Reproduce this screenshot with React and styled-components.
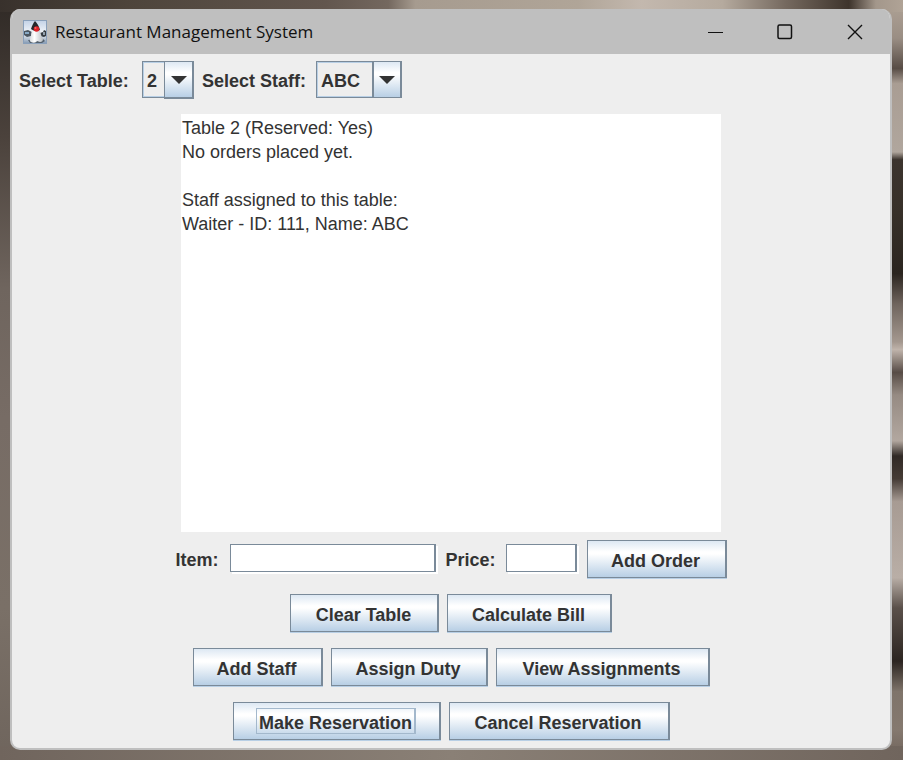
import React, { useState } from "react";
import styled, { createGlobalStyle, css } from "styled-components";

const GlobalStyle = createGlobalStyle`
  * { box-sizing: border-box; }
  html, body { margin: 0; }
  body { font-family: "Liberation Sans", Arial, sans-serif; color: #333; }
`;

const Desktop = styled.div`
  display: flex;
  min-height: 100vh;
  padding: 9px 11px 10px 10px;
  background:
    linear-gradient(90deg, #38312c 0, #4d443b 14%, #62564e 36%, #74685f 43%, #a69b8f 46%, #b0a598 64%, #c3b8ae 71%, #b5aa9e 80%, #75695f 87%, #3e342c 94%, #a3978b 97%, #b0a396 100%) top / 100% 12px no-repeat,
    linear-gradient(90deg, #70655d, #8a8076 50%, #70655d) bottom / 100% 14px no-repeat,
    linear-gradient(180deg, #b0a396 0, #9a8e84 5%, #574c45 9%, #a99d93 11%, #b0a69d 20%, #3c342e 21%, #373029 28%, #2b2520 36%, #6f645d 40%, #a4988f 45%, #c0b4ab 46%, #574c46 49%, #968b83 52%, #b2a79f 58%, #312a26 60%, #453b35 63%, #a79b93 66%, #b9aea6 76%, #5a504a 80%, #2c2521 87%, #7f746a 91%, #85796f 96%, #6e625a 100%) right / 14px 100% no-repeat,
    linear-gradient(180deg, #302a26 0, #4b423c 18%, #6f655e 38%, #776c65 55%, #7a7067 80%, #6f655d 100%);
`;

const Window = styled.main`
  flex: 1;
  display: flex;
  flex-direction: column;
  min-width: 0;
  overflow: hidden;
  border: 2px solid #bfbfbf;
  border-top-width: 0;
  border-radius: 10px;
  background: #eee;
`;

const TitleBar = styled.header`
  display: flex;
  align-items: center;
  height: 45px;
  padding-left: 11px;
  background: #bfbfbf;
`;

const Title = styled.h1`
  flex: 1;
  margin: 0 0 0 8px;
  color: #111;
  font: 400 17px/24px "Open Sans", "Noto Sans", sans-serif;
`;

const WindowControl = styled.button`
  display: grid;
  place-items: center;
  width: 70px;
  height: 45px;
  padding: 0;
  border: 0;
  background: none;
  color: #111;
`;

const Row = styled.div`
  display: flex;
  flex-wrap: wrap;
  align-items: center;
  justify-content: ${(p) => (p.$start ? "flex-start" : "center")};
  gap: 8px;
  padding: ${(p) => (p.$start ? "7px 7px" : "8px")};
`;

const Label = styled.label`
  min-width: ${(p) => p.$width}px;
  padding-top: 2px;
  font-size: 18px;
  font-weight: 700;
  line-height: 24px;
`;

const glossy = css`
  background: linear-gradient(180deg, #dde8f3 0, #fff 30%, #fff 36%, #b8cfe5 100%);
`;

const Combo = styled.div`
  display: grid;
  grid-template-columns: 1fr 30px;
  width: ${(p) => p.$width}px;
  height: 38px;
`;

const ComboSelect = styled.select`
  grid-area: 1 / 1 / 2 / 3;
  appearance: none;
  height: 37px;
  padding: 2px 0 0 4px;
  border: 1px solid #7a8a99;
  border-radius: 0;
  outline: 0;
  background: #eee;
  box-shadow: inset 1px 1px #b8cfe5, inset 0 -1px #b8cfe5;
  color: #333;
  font: 700 18px/24px "Liberation Sans", Arial, sans-serif;
`;

const ComboArrow = styled.span`
  ${glossy}
  grid-area: 1 / 2 / 2 / 3;
  display: grid;
  place-items: center;
  z-index: 1;
  pointer-events: none;
  height: ${(p) => (p.$raised ? 38 : 37)}px;
  border: 1px solid #7a8a99;
  border-right-width: 2px;
  border-left-width: ${(p) => (p.$raised ? 1 : 2)}px;
  border-bottom-width: ${(p) => (p.$raised ? 2 : 1)}px;
`;

const Output = styled.textarea`
  display: block;
  flex: 1;
  width: 540px;
  max-width: 100%;
  min-height: 418px;
  margin: 8px auto 0;
  padding: 2px 1px;
  border: 0;
  outline: 0;
  resize: none;
  background: #fff;
  color: #333;
  font: 400 18px/24px "Liberation Sans", Arial, sans-serif;
`;

const TextField = styled.input`
  width: ${(p) => p.$width}px;
  height: 28px;
  margin: 0 2px 3px 0;
  padding: 0 4px;
  border: 1px solid #7a8a99;
  border-right-width: 2px;
  border-radius: 0;
  outline: 0;
  background: #fff;
  box-shadow: 2px 2px #fff;
  font: 400 18px/24px "Liberation Sans", Arial, sans-serif;
`;

const Button = styled.button`
  ${glossy}
  display: flex;
  align-items: center;
  justify-content: center;
  min-width: ${(p) => p.$width}px;
  height: 38px;
  padding: 0 12px;
  border: 1px solid #7a8a99;
  border-right-width: 2px;
  border-radius: 0;
  box-shadow: 0 1px #b8cfe5;
  color: #333;
  font: 700 18px/20px "Liberation Sans", Arial, sans-serif;
  white-space: nowrap;
`;

const ButtonText = styled.span`
  padding: 4px 2px 0;
  border: 1px solid ${(p) => (p.$focused ? "#a3b8cc" : "transparent")};
  border-right-width: 2px;
`;

const JavaIcon = () => (
  <svg width="24" height="24" viewBox="0 0 24 24" aria-hidden="true">
    <defs>
      <linearGradient id="sky" x1="0" y1="0" x2="0" y2="1">
        <stop offset="0" stopColor="#c3d2e6" />
        <stop offset=".55" stopColor="#f3f6fa" />
        <stop offset="1" stopColor="#8399b2" />
      </linearGradient>
      <linearGradient id="body" x1="0" y1="0" x2="1" y2="0">
        <stop offset="0" stopColor="#d9dcde" />
        <stop offset=".35" stopColor="#fff" />
        <stop offset="1" stopColor="#b9bec3" />
      </linearGradient>
    </defs>
    <rect x=".5" y=".5" width="23" height="23" fill="url(#sky)" stroke="#8aa0ba" />
    <path d="M1 11l4-1 4 2-1 4-4 1-3-2z" fill="#4a5661" />
    <path d="M2 12h4v2H2z" fill="#87a9c6" />
    <path d="M17 13l3-1 1-2 2 1v5l-2 1-4-1z" fill="#353c43" />
    <path d="M20 12h2v3h-2z" fill="#95a2ad" />
    <path d="M5 20l15-1 2 2-3 2H7z" fill="#53606d" />
    <path d="M9 9c3-1 7-1 8 2 1 3 1 5 3 8 0 2-1 3-3 3l-3-1c-1 2-4 2-6 1-2-1-1-4 0-6z" fill="url(#body)" />
    <path d="M12 1c2 2 4 5 5 9-2 1-3 1-5 1-2-1-3-1-4-2 1-3 2-6 4-8z" fill="#23272b" />
    <circle cx="13.5" cy="9" r="2.8" fill="#dc2027" />
    <circle cx="12.5" cy="8" r="1" fill="#f46b65" />
  </svg>
);

const Arrow = () => (
  <svg width="16" height="8" viewBox="0 0 16 8" aria-hidden="true">
    <path d="M0 0h16L8 8z" fill="#333" />
  </svg>
);

function ComboBox({ id, width, options, raised }) {
  return (
    <Combo $width={width}>
      <ComboSelect id={id}>
        {options.map((o) => <option key={o}>{o}</option>)}
      </ComboSelect>
      <ComboArrow $raised={raised}><Arrow /></ComboArrow>
    </Combo>
  );
}

const actionRows = [
  [["Clear Table", 149], ["Calculate Bill", 165]],
  [["Add Staff", 130], ["Assign Duty", 157], ["View Assignments", 214]],
  [["Make Reservation", 208], ["Cancel Reservation", 221]],
];

const summary = `Table 2 (Reserved: Yes)
No orders placed yet.

Staff assigned to this table:
Waiter - ID: 111, Name: ABC`;

export default function App() {
  const [active, setActive] = useState("Make Reservation");
  const action = ([name, width]) => (
    <Button key={name} type="button" $width={width} onClick={() => setActive(name)}>
      <ButtonText $focused={active === name}>{name}</ButtonText>
    </Button>
  );

  return (
    <>
      <GlobalStyle />
      <Desktop>
        <Window>
          <TitleBar>
            <JavaIcon />
            <Title>Restaurant Management System</Title>
            <WindowControl type="button" aria-label="Minimize">
              <svg width="16" height="16"><path d="M1 8.5h15" stroke="currentColor" /></svg>
            </WindowControl>
            <WindowControl type="button" aria-label="Maximize">
              <svg width="16" height="16" fill="none"><rect x="1" y="1" width="13.5" height="13.5" rx="1.5" stroke="currentColor" strokeWidth="1.5" /></svg>
            </WindowControl>
            <WindowControl type="button" aria-label="Close">
              <svg width="16" height="16"><path d="M1 1l14 14M15 1L1 15" stroke="currentColor" strokeWidth="1.4" /></svg>
            </WindowControl>
          </TitleBar>
          <Row $start>
            <Label htmlFor="table" $width={115}>Select Table:</Label>
            <ComboBox id="table" width={52} options={["2"]} raised />
            <Label htmlFor="staff" $width={106}>Select Staff:</Label>
            <ComboBox id="staff" width={86} options={["ABC"]} />
          </Row>
          <Output aria-label="Table details" readOnly value={summary} />
          <Row>
            <Label htmlFor="item" $width={46}>Item:</Label>
            <TextField id="item" $width={206} />
            <Label htmlFor="price" $width={52}>Price:</Label>
            <TextField id="price" $width={71} />
            {action(["Add Order", 140])}
          </Row>
          {actionRows.map((row) => <Row key={row[0][0]}>{row.map(action)}</Row>)}
        </Window>
      </Desktop>
    </>
  );
}
